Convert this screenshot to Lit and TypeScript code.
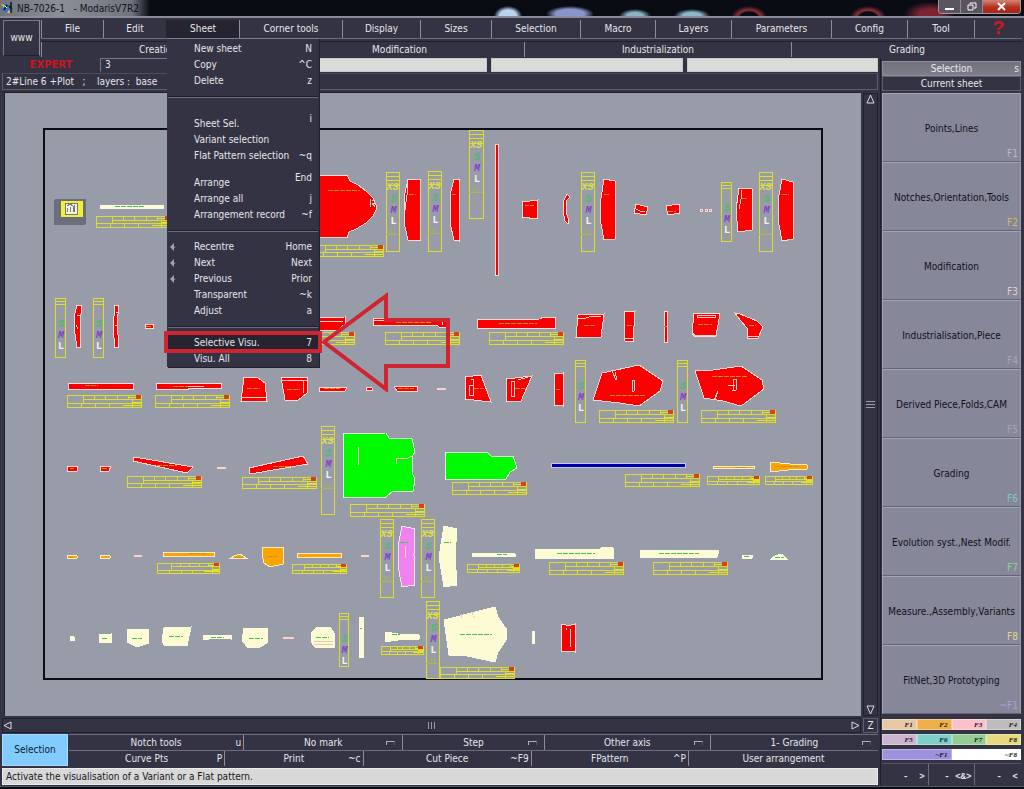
import { LitElement, html, svg, css } from "lit";
import { customElement, state } from "lit/decorators.js";

type Pt = [string, string];

const MENUS: [string, number][] = [
  ["File", 62], ["Edit", 63], ["Sheet", 73], ["Corner tools", 103], ["Display", 78], ["Sizes", 71],
  ["Selection", 89], ["Macro", 75], ["Layers", 76], ["Parameters", 100], ["Config", 76], ["Tool", 67], ["?", 48],
];
const GROUPS: [string, number][] = [["Creation", 233], ["Modification", 250], ["Industrialization", 267], ["Grading", 231]];

interface Entry { label?: string; key?: string; tall?: boolean; mark?: boolean; current?: boolean }
const SHEET_MENU: Entry[] = [
  { label: "New sheet", key: "N" }, { label: "Copy", key: "^C" }, { label: "Delete", key: "z" }, {},
  { label: "Sheet Sel.", key: "i", tall: true }, { label: "Variant selection" },
  { label: "Flat Pattern selection", key: "~q" }, { label: "Arrange", key: "End", tall: true },
  { label: "Arrange all", key: "j" }, { label: "Arrangement record", key: "~f" }, {},
  { label: "Recentre", key: "Home", mark: true }, { label: "Next", key: "Next", mark: true },
  { label: "Previous", key: "Prior", mark: true }, { label: "Transparent", key: "~k" },
  { label: "Adjust", key: "a" }, {}, { label: "Selective Visu.", key: "7", current: true },
  { label: "Visu. All", key: "8" },
];

const PANELS: [string, string, string][] = [
  ["Points,Lines", "F1", "#b8b6c2"], ["Notches,Orientation,Tools", "F2", "#d2b866"], ["Modification", "F3", "#e6ccd8"],
  ["Industrialisation,Piece", "F4", "#a6a6b4"], ["Derived Piece,Folds,CAM", "F5", "#aaa0b4"], ["Grading", "F6", "#7cc6c8"],
  ["Evolution syst.,Nest Modif.", "F7", "#8ad090"], ["Measure.,Assembly,Variants", "F8", "#e0d68c"],
  ["FitNet,3D Prototyping", "~F1", "#a8a0dc"],
];
const SWATCHES: Pt[][] = [
  [["F1", "#e6c8a2"], ["F2", "#efb049"], ["F3", "#fcc0ca"], ["F4", "#bdbdbd"]],
  [["F5", "#cbb4cd"], ["F6", "#7bd0c9"], ["F7", "#95cc92"], ["F8", "#e8d87f"]],
  [["~F1", "#9d90dc"], ["~F8", "#ffffff"]],
];

interface Tool { label: string; key?: string; weight: number; menu?: boolean }
const TOOLS: Tool[][] = [
  [{ label: "Notch tools", key: "u", weight: 175 }, { label: "No mark", weight: 159, menu: true },
   { label: "Step", weight: 141, menu: true }, { label: "Other axis", weight: 166, menu: true },
   { label: "1- Grading", weight: 168, menu: true }],
  [{ label: "Curve Pts", key: "P", weight: 156 }, { label: "Print", key: "~c", weight: 138 },
   { label: "Cut Piece", key: "~F9", weight: 168 }, { label: "FPattern", key: "^P", weight: 157 },
   { label: "User arrangement", weight: 190 }],
];

/* Pattern pieces: fill class and outline, in sheet coordinates. */
const PIECES: Pt[] = [
  ["pale", "100,205 163,205 163,208 100,208"],
  ["red", "290,175 347,175 350,181 358,185 366,191 373,198 376,205 376,210 373,216 366,223 356,229 349,232 347,238 290,237"],
  ["red", "408,179 420,179 420,240 408,240 405,227 404,207 405,193"],
  ["red", "454,179 459,179 459,241 454,240 450,223 450,195"],
  ["red", "495,144 498,144 498,275 495,275"],
  ["red", "522,202 538,200 537,219 522,217"],
  ["red", "567,194 570,197 567,200 566,212 569,221 568,224 565,221 563,210 564,200"],
  ["red", "604,179 615,181 615,239 604,240 600,218 600,205"],
  ["red", "636,204 648,207 646,215 634,213"],
  ["red", "666,206 679,204 680,213 668,215"],
  ["red", "739,188 752,189 752,230 738,232 736,210"],
  ["red", "782,179 793,182 793,239 782,241 778,219 778,201"],
  ["red", "77,305 82,305 80,323 81,347 77,348 74,327 75,313"],
  ["red", "115,305 119,305 117,323 119,347 115,348 113,327"],
  ["red", "145,324 153,324 153,328 145,328"],
  ["red", "290,318 345,317 345,324 338,330 290,330"],
  ["red", "373,318 449,318 449,327 439,327 437,325 373,325"],
  ["red", "477,320 540,319 543,317 555,317 555,328 477,328"],
  ["red", "578,315 604,314 601,337 576,337"],
  ["red", "624,312 635,311 633,342 625,341"],
  ["red", "664,311 667,311 667,342 664,342"],
  ["red", "694,313 720,314 716,336 695,337 692,333"],
  ["red", "735,313 740,314 757,321 763,327 758,338 747,338 747,328 740,320"],
  ["red", "68,383 133,383 133,389 68,389"],
  ["red", "156,383 221,383 221,388 188,388 188,389 156,389"],
  ["red", "244,377 257,377 265,383 267,401 241,401"],
  ["red", "281,377 307,377 307,393 297,401 285,400"],
  ["red", "319,387 347,387 345,391 319,391"],
  ["red", "366,390 366,388 369,387 372,388 372,390"],
  ["red", "394,386 417,386 417,391 397,391"],
  ["red", "465,377 481,375 491,402 465,399"],
  ["red", "506,379 532,376 521,401 506,401"],
  ["red", "554,373 558,374 563,373 563,406 554,405"],
  ["red", "593,400 602,373 639,365 663,381 660,391 639,406 620,403"],
  ["red", "695,371 713,370 741,366 762,380 764,389 741,406 723,401 704,398"],
  ["red", "67,466 78,466 77,471 67,471"],
  ["red", "100,466 111,466 109,471 100,471"],
  ["red", "134,457 193,467 187,473 133,461"],
  ["red", "249,468 303,456 308,464 250,474"],
  ["green", "343,434 386,433 389,438 412,439 415,452 412,457 412,472 415,480 413,491 393,491 386,497 343,497"],
  ["green", "445,452 487,452 491,456 513,456 517,468 510,472 506,479 445,479"],
  ["blue", "551,463 685,463 685,467 551,467"],
  ["orange", "713,466 754,466 754,468 713,468"],
  ["orange", "770,462 790,464 807,465 807,469 788,470 770,472"],
  ["orange", "67,555 71,555 77,556 77,558 67,559"],
  ["orange", "100,555 104,555 110,556 110,558 100,559"],
  ["orange", "163,552 214,552 214,556 163,556"],
  ["orange", "231,558 234,556 240,554 246,558"],
  ["orange", "262,547 283,547 283,564 270,567 264,563 262,555"],
  ["orange", "297,553 341,553 341,557 297,557"],
  ["violet", "402,526 415,529 414,555 415,585 402,587 398,566 398,546"],
  ["pale", "444,526 457,529 455,555 457,585 444,587 439,557"],
  ["pale", "472,554 505,553 515,554 515,556 472,556"],
  ["pale", "535,550 600,549 602,547 613,548 613,558 535,558"],
  ["pale", "640,550 719,550 717,557 640,557"],
  ["pale", "742,555 752,555 752,558 742,559"],
  ["pale", "771,559 775,556 782,554 787,559"],
  ["pale", "70,636 74,637 74,640 70,640"],
  ["pale", "99,635 111,634 111,642 99,642"],
  ["pale", "127,629 148,629 149,643 137,647 127,642"],
  ["pale", "164,628 191,627 187,646 164,645 162,641"],
  ["pale", "203,635 231,635 231,639 215,638 203,640"],
  ["pale", "244,628 267,628 267,643 260,647 247,647 242,640"],
  ["pale", "317,627 330,627 334,633 334,647 315,647 311,642 311,633"],
  ["pale", "359,617 363,617 363,657 359,657"],
  ["pale", "385,632 398,634 419,635 419,639 398,640 385,642"],
  ["pale", "444,620 495,607 498,617 507,630 506,640 498,652 495,662 467,656 449,655"],
  ["pale", "532,631 534,631 534,643 532,643"],
  ["red", "561,624 566,625 571,625 575,624 575,652 571,651 566,651 561,652"],
];

/* Yellow cartridges: x, y, width, height. */
const TABLES: number[][] = [
  [96, 216, 74, 11], [309, 245, 74, 11], [280, 332, 74, 12], [385, 332, 74, 12], [489, 332, 74, 12],
  [599, 410, 74, 12], [701, 410, 74, 12], [67, 395, 74, 12], [155, 395, 74, 12], [127, 476, 74, 11],
  [242, 477, 74, 11], [350, 504, 74, 12], [452, 482, 74, 12], [625, 474, 74, 12], [707, 476, 52, 8],
  [765, 476, 47, 8], [157, 563, 62, 10], [292, 564, 54, 9], [467, 564, 52, 8], [549, 562, 74, 12],
  [653, 562, 74, 12], [381, 646, 42, 8], [440, 667, 74, 11],
];

/* Size ladders: x, y, width, height, 1 when it carries XS and XL. */
const LADDERS: number[][] = [
  [386, 172, 13, 79, 1], [428, 171, 13, 80, 1], [469, 130, 14, 88, 1], [581, 172, 13, 79, 1], [759, 172, 13, 79, 1],
  [721, 182, 10, 59, 0], [55, 298, 10, 59, 0], [93, 298, 10, 59, 0], [575, 360, 10, 62, 0], [677, 360, 10, 62, 0],
  [321, 426, 13, 88, 1], [380, 519, 13, 78, 1], [421, 519, 13, 78, 1], [426, 601, 13, 77, 1], [339, 613, 9, 53, 0],
];

/* Small thread and placement marks drawn as single strokes: class and path. */
const MARKS: Pt[] = [
  ["grain", "M328 190h32"], ["grain", "M409 194h7"], ["grain", "M452 194h4"], ["grain", "M604 194h6"], ["grain", "M782 194h7"],
  ["grain", "M742 198h6"], ["grain", "M525 206v-1h9"], ["grain", "M668 211h8"], ["grain", "M146 326h6"],
  ["grain", "M396 322h36"], ["grain", "M499 323h38"], ["grain", "M584 325h12"], ["grain", "M627 325h5"], ["grain", "M664 326h3"],
  ["grain", "M698 324h14"], ["grain", "M749 325h7"], ["grain", "M85 385h13"], ["grain", "M173 386h15"], ["grain", "M247 388h13"],
  ["grain", "M287 389h13"], ["grain", "M324 388h16"], ["grain", "M398 388h16"], ["grain", "M474 388h10"], ["grain", "M515 388h10"],
  ["grain", "M556 389h4"], ["grain", "M610 395h36"], ["grain", "M712 376h35"], ["grain", "M70 468h4"], ["grain", "M102 468h5"],
  ["grain", "M157 465h20"], ["grain", "M273 466h19"], ["grain", "M735 467h12"], ["grain", "M775 466h25"], ["grain", "M68 557h6"],
  ["grain", "M235 557h8"], ["grain", "M189 553h18"], ["grain", "M268 556h9"], ["thread", "M400 542h8"], ["thread", "M115 206h30"],
  ["thread", "M444 542h7"], ["thread", "M497 554h10"], ["thread", "M557 553h38"], ["thread", "M659 553h40"], ["thread", "M744 556h5"],
  ["thread", "M775 557h9"], ["thread", "M102 638h6"], ["thread", "M132 638h10"], ["thread", "M169 636h14"], ["thread", "M211 637h13"],
  ["thread", "M249 638h14"], ["thread", "M316 637h13"], ["thread", "M360 628h2"], ["thread", "M392 634h8"], ["thread", "M460 634h32"],
  ["line", "M370 199v8M372 200h2v3h-2l3 4M408 181l-1 14-2 15"], ["line", "M741 190v9l-2 10M636 209l4 2h5"],
  ["line", "M373 320h76M442 321v4"], ["line", "M578 318h8l6-2h9M625 338h8M697 315h18v2h-18zM692 333l3 2h21M747 336h11"],
  ["line", "M242 397h24M281 380h26M303 381v12M188 386h16"], ["line", "M471 379h2v16h-4v-10h4M511 381h3v15h-3zM518 380l10-3"],
  ["line", "M612 371l4 9 1-1-2-7M632 380h3l-1 11h-2zM728 385h7M734 379h3l-1 11h-3zM714 400l4-9-3 9"],
  ["line", "M358 447v18M396 464v-6h12l4-2M405 546v12M570 629v18M566 628v2"],
  ["line", "M700 209h2v2h-2zM705 209h2v2h-2zM709 209h2v2h-2zM437 388h8v1h-8zM217 467h8v1h-8zM134 555h7v1h-7zM361 555h7v1h-7zM283 637h10v1h-10z"],
  ["line", "M77 315l3 1M76 325l2 4M116 312h2M115 325h2M317 321h26"],
  ["faint", "M461 614v4M472 612v3M473 616l2 2M314 641h19M314 644h19"],
];

function ladder([x, y, w, h, full]: number[]) {
  const c = x + w / 2;
  const rungs = full ? [4, 8, 13] : [3, 6];
  const s = full ? 0 : -1;
  return svg`
    <rect class="y" x=${x} y=${y} width=${w} height=${h}></rect>
    ${rungs.map((r) => svg`<path class="y" d="M${x} ${y + r}h${w}"></path>`)}
    ${full ? svg`<text class="xs" x=${c} y=${y + 18}>XS</text>
      <text class="xl" x=${c} y=${y + 62}>XL</text>
      <path class="y dim" d="M${x} ${y + 62}h${w}"></path>` : null}
    <text class="s" x=${c + 1} y=${y + s + 30}>S</text>
    <text class="m" x=${c + 1} y=${y + s + 41}>M</text>
    <text class="l" x=${c + 1} y=${y + s + 52}>L</text>`;
}

function cartridge([x, y, w, h]: number[]) {
  const a = Math.round(h / 3), b = Math.round((2 * h) / 3);
  const p = (f: number) => x + Math.round(w * f);
  return svg`
    <rect class="y" x=${x} y=${y} width=${w} height=${h}></rect>
    <path class="y" d="M${p(0.22)} ${y + a}H${x + w}M${x} ${y + b}H${x + w}M${p(0.22)} ${y}V${y + b}"></path>
    <path class="y" d="M${p(0.37)} ${y}v${a}M${p(0.51)} ${y}v${a}M${p(0.67)} ${y}v${a}M${p(0.82)} ${y}v${a}
      M${p(0.19)} ${y + b}V${y + h}M${p(0.38)} ${y + b}V${y + h}M${p(0.57)} ${y + b}V${y + h}M${p(0.88)} ${y + a}V${y + h}"></path>
    <path class="y thin" d="M${p(0.82)} ${y + 2}H${x + w}M${p(0.76)} ${y + h - 2}H${x + w}M${p(0.88)} ${y + b - 1}H${x + w}"></path>
    <rect class="stamp" x=${x + w - 5} y=${y} width="5" height=${Math.min(4, a)}></rect>`;
}

@customElement("sheet-canvas")
class SheetCanvas extends LitElement {
  static styles = css`
    :host { display: block; background: #989ca8; overflow: hidden; }
    svg { display: block; width: 100%; height: 100%; shape-rendering: crispEdges; }
    .frame { fill: none; stroke: #0b0d16; stroke-width: 2; }
    .red { fill: #fa0000; stroke: #ffd8d4; }
    .green { fill: #00fa00; stroke: #d8ffd8; }
    .blue { fill: #0000a8; stroke: #c4c8f4; }
    .orange { fill: #fba400; stroke: #fdeccc; }
    .violet { fill: #ee82ee; stroke: #fbe0fa; }
    .pale { fill: #fdfbd4; stroke: #fbfae0; }
    .y { fill: none; stroke: #dede28; }
    .thin { stroke: #e8e418; }
    .dim { stroke: #b0b060; }
    .stamp { fill: #d8401c; }
    .grain { fill: none; stroke: #c89410; stroke-dasharray: 5 1; }
    .thread { fill: none; stroke: #46c05a; stroke-dasharray: 5 1; }
    .line { fill: none; stroke: #ffd0cc; }
    .faint { fill: none; stroke: #ecc8a8; }
    .tile { fill: #6b6f7c; }
    .lit { fill: #f2f034; }
    .doodle { fill: #f4f4e4; stroke: #77767c; }
    text { font: italic bold 10px "Liberation Mono", "Liberation Serif", monospace; text-anchor: middle; }
    .xs { fill: #dcdc50; }
    .s { fill: #52b86e; }
    .m { fill: #8440cc; }
    .l { fill: #f2f2f4; font-style: normal; }
    .xl { fill: #a0ac70; font-size: 8px; }
  `;
  render() {
    return html`<svg viewBox="5 93 856 623" preserveAspectRatio="xMidYMid meet" role="img" aria-label="Pattern sheet">
      <rect class="frame" x="44" y="129" width="778" height="550"></rect>
      <rect class="tile" x="54" y="199" width="32" height="26" rx="2"></rect>
      <rect class="lit" x="61" y="201" width="22" height="16"></rect>
      <path class="doodle" d="M65 203h12v11h-12zM67 206l3-2 3 2v6M70 207v5M74 205v7M67 208v4"></path>
      ${PIECES.map(([kind, points]) => svg`<polygon class=${kind} points=${points}></polygon>`)}
      ${MARKS.map(([kind, d]) => svg`<path class=${kind} d=${d}></path>`)}
      ${TABLES.map(cartridge)}
      ${LADDERS.map(ladder)}
    </svg>`;
  }
}

@customElement("app-root")
class AppRoot extends LitElement {
  @state() private open = "Sheet";

  static styles = css`
    :host {
      display: flex; flex-direction: column; height: 100vh; box-sizing: border-box;
      background: #333344; color: #e6e6ea; overflow: hidden;
      font: 10px/14px "DejaVu Sans Condensed", "DejaVu Sans", sans-serif;
      --edge: #77778a;
    }
    * { box-sizing: border-box; }
    button, input, select {
      font: inherit; color: inherit; background: none; border: 0; margin: 0; padding: 0; border-radius: 0; min-width: 0;
      white-space: nowrap;
    }
    .title {
      display: flex; align-items: center; height: 18px; gap: 4px; padding-left: 1px;
      border-bottom: 2px solid #8a8c98; color: #10121a;
      background:
        radial-gradient(ellipse 14px 10px at 508px 16px, #b8d4ee 60%, transparent),
        radial-gradient(ellipse 24px 8px at 570px 14px, #8a94cc 60%, transparent),
        radial-gradient(ellipse 16px 7px at 635px 16px, #88b4c4 50%, transparent),
        radial-gradient(ellipse 18px 7px at 692px 16px, #8cb8cc 50%, transparent),
        radial-gradient(ellipse 18px 12px at 749px 18px, transparent 50%, #8c3038 65%, transparent),
        radial-gradient(ellipse 18px 12px at 868px 18px, transparent 50%, #8c3038 65%, transparent),
        radial-gradient(ellipse 26px 12px at 930px 14px, #7c2434 40%, transparent),
        linear-gradient(90deg, #70747e 0, #8b8f98 60px, #70747e 132px, #0a0c14 150px, #0a0c14 100%);
    }
    .title svg { width: 12px; height: 12px; }
    .caption { flex: 1; white-space: pre; padding-top: 1px; }
    .winbtns { display: flex; align-self: flex-start; height: 14px; margin-right: 3px; border: 1px solid #9a9ca6; border-top: 0; border-radius: 0 0 4px 4px; overflow: hidden; }
    .winbtns button { display: grid; place-items: center; width: 22px; background: #5a545e; border-right: 1px solid #8c8c96; }
    .winbtns button:last-child { width: 37px; background: linear-gradient(#d08878, #b83020 55%, #a82414); border: 0; }
    .winbtns svg { width: 11px; height: 9px; }

    .head { display: grid; grid-template-columns: 37px 1fr; gap: 1px; padding: 2px 2px 0 3px; }
    .www { height: 36px; border: 1px solid var(--edge); border-color: var(--edge) #8a8a9a #22222e var(--edge); }
    .bar { display: flex; }
    .bar > button { flex: var(--w) 1 0; border-left: 1px solid #8c8c9a; }
    .slot { position: relative; flex: var(--w) 1 0; display: flex; }
    .slot > button { flex: 1; height: 18px; border-left: 1px solid #8c8c9a; }
    .menubar { margin-bottom: 2px; border-bottom: 1px solid #6c6c7e; }
    .menubar .active { background: #252430; border-color: #252430; }
    .menubar .help { color: #c81820; font: bold 20px/18px "Liberation Mono", monospace; }
    .groups { border-top: 1px solid #20202c; }
    .groups button { height: 15px; }

    .menu {
      position: absolute; z-index: 2; left: 1px; top: 18px; width: 152px; padding: 2px 1px 0;
      background: #333344; border-top: 1px solid #7c7c8c; box-shadow: 1px 1px 0 #22222e; display: flex; flex-direction: column;
    }
    .item {
      flex: none; position: relative; display: grid; grid-template-columns: 26px 1fr auto; align-items: center;
      height: 16px; width: 100%; padding-right: 6px; text-align: left; overflow: visible;
    }
    .tall { height: 27px; }
    .tall .name { align-self: end; padding-bottom: 1px; }
    .current { background: #252430; }
    .menu hr { width: 100%; height: 16px; margin: 0; border: 0; background: linear-gradient(#1f1f2c, #1f1f2c) 0 7px / 100% 1px no-repeat, linear-gradient(#6c6c80, #6c6c80) 0 8px / 100% 1px no-repeat; }
    .pin { display: block; width: 8px; height: 8px; margin-left: 2px; }
    .callout { position: absolute; left: -5px; top: -43px; width: 290px; height: 100px; pointer-events: none; fill: none; stroke: #cf2531; stroke-width: 4; }

    .main { flex: 1; min-height: 0; display: grid; grid-template-columns: minmax(0, 1fr) 142px; column-gap: 2px; padding: 1px 2px 0 2px; }
    .work { display: flex; flex-direction: column; min-height: 0; }
    .fields { display: grid; grid-template-columns: 94px repeat(4, 1fr); column-gap: 4px; height: 14px; align-items: center; }
    .mode { color: #d01420; font: bold 10px/14px "DejaVu Sans", sans-serif; text-align: center; padding-left: 4px; }
    .fields input { width: 100%; height: 14px; background: #dadcda; color: #111; padding: 0 4px; border: 1px solid #c8cac8; }
    .fields .level { background: #333344; color: #e6e6ea; border-color: #77778a #333344 #333344 #77778a; }
    .info { height: 17px; margin: 1px 0 0; padding: 0 3px; border: 1px solid #5e5e70; border-top-color: #4c4c5e; white-space: pre; line-height: 15px; }
    .view { flex: 1; min-height: 0; display: grid; grid-template-columns: minmax(0, 1fr) 15px; grid-template-rows: minmax(0, 1fr) 15px; gap: 2px; padding: 3px 0 1px; }
    sheet-canvas { margin-left: 3px; box-shadow: -1px -1px 0 #1f1f2c; min-height: 0; }
    .scroll { display: flex; justify-content: space-between; align-items: center; background: #333344; border: 1px solid #22222e; }
    .scroll.v { flex-direction: column; }
    .scroll svg { display: block; width: 11px; height: 11px; fill: none; stroke: #dcdce2; }
    .scroll .grip { stroke: #9a9aaa; }
    .corner { border: 1px solid #5e5e70; line-height: 12px; }

    .tools { display: grid; grid-template-columns: 66px 1fr; column-gap: 1px; height: 32px; }
    .pick { background: #82cbff; color: #10202c; border: 1px solid #a8dcff; }
    .rows { display: grid; grid-template-rows: 1fr 1fr; }
    .row { display: flex; border-top: 1px solid #6c6c7e; }
    .tool { flex: var(--w) 1 0; display: grid; min-width: 0; border-right: 1px solid #8c8c9a; }
    .row .tool:last-child { border-right: 0; }
    .tool > * { grid-area: 1 / 1; }
    .tool select { appearance: none; width: 100%; text-align: center; text-align-last: center; }
    .tool .end { justify-self: end; align-self: center; margin-right: 2px; pointer-events: none; }
    .tool .knob { width: 9px; height: 4px; margin-right: 7px; border-top: 1px solid #b0b0bc; border-left: 1px solid #b0b0bc; border-right: 1px solid #55556a; }
    .status { display: block; height: 17px; margin-top: 2px; padding: 1px 3px; background: #d8d8d8; color: #16161c; border: 1px solid #ececec; }

    .side { display: flex; flex-direction: column; min-height: 0; padding: 3px 1px 0 1px; border-left: 1px solid #1f1f2c; }
    .mode-btn { position: relative; height: 15px; background: linear-gradient(#72727f, #7e7e8a); border: 1px solid #8e8e9c; }
    .mode-btn .end { position: absolute; right: 1px; top: 0; }
    .sheet { height: 15px; border: 1px solid #5e5e70; margin-bottom: 2px; }
    .panels { flex: 1; min-height: 0; display: grid; grid-auto-rows: 1fr; }
    .panel { position: relative; background: #87879a; color: #101018; border: 1px solid; border-color: #a4a4b0 #9c9cac #63637a #a4a4b0; padding-top: 2px; }
    .panel .end { position: absolute; right: 2px; bottom: 0; }
    .swatches { display: grid; gap: 4px; padding: 5px 0 3px; }
    .sw { display: flex; height: 11px; }
    .sw button { flex: 1; text-align: right; padding-right: 3px; color: #15151c; font: italic bold 7px/11px "Liberation Serif", serif; border: 1px solid rgba(255, 255, 255, 0.35); }
    .keys { display: flex; height: 22px; }
    .keys button { flex: 1; text-align: right; padding: 4px 3px 0; white-space: pre; font: bold 9px/12px "Liberation Mono", monospace; border-right: 1px solid #6c6c7e; border-top: 1px solid #55556a; }
    .keys button:last-child { border-right: 0; }
    .foot { height: 3px; margin-top: 1px; background: linear-gradient(#55576a 1px, #0a0c14 1px); }
  `;

  private menu() {
    return html`<div class="menu" role="menu">
      ${SHEET_MENU.map((e) => e.label
        ? html`<button role="menuitem" class="item ${e.tall ? "tall" : ""} ${e.current ? "current" : ""}">
            <span>${e.mark ? html`<svg class="pin" viewBox="0 0 8 8"><path d="M4 0L0 4l4 4V5l3-2-3 1z" fill="#a0a0ae"></path><path d="M5 2l2 1" stroke="#1f1f2c"></path></svg>` : null}</span>
            <span class="name">${e.label}</span><span>${e.key ?? ""}</span>
            ${e.current ? html`<svg class="callout" viewBox="0 0 290 100">
              <rect x="3" y="41" width="154" height="18"></rect>
              <path d="M161 50L223 4V28H285V74H223V97Z"></path></svg>` : null}
          </button>`
        : html`<hr />`)}
    </div>`;
  }

  private tool(t: Tool) {
    return html`<div class="tool" style="--w:${t.weight}">
      ${t.menu
        ? html`<select aria-label=${t.label}><option>${t.label}</option></select><span class="end knob"></span>`
        : html`<button>${t.label}</button><span class="end">${t.key ?? ""}</span>`}
    </div>`;
  }

  render() {
    return html`
      <header class="title">
        <svg viewBox="0 0 12 12"><circle cx="5" cy="6" r="4" fill="#2f78c8"></circle><path d="M0 2l4 1-1 3zM8 8l3 3H6z" fill="#f0c020"></path><path d="M10 0v11M8 4l3 3M3 8l3-5" stroke="#10121a" stroke-width="1.5"></path><path d="M4 4l2 2" stroke="#fff"></path></svg>
        <span class="caption">NB-7026-1   - ModarisV7R2</span>
        <div class="winbtns">
          <button aria-label="Minimize"><svg viewBox="0 0 11 9"><path d="M1 6h9v2H1z" fill="#fff"></path></svg></button>
          <button aria-label="Restore"><svg viewBox="0 0 11 9" fill="none" stroke="#fff"><path d="M4 2V1h6v5H8"></path><path d="M2 3h5v5H2z"></path></svg></button>
          <button aria-label="Close"><svg viewBox="0 0 11 9"><path d="M2 1l7 7M9 1L2 8" stroke="#fff" stroke-width="2"></path></svg></button>
        </div>
      </header>
      <div class="head">
        <button class="www">www</button>
        <div>
          <nav class="bar menubar">
            ${MENUS.map(([name, w]) => html`<div class="slot" style="--w:${w}">
              <button class="${name === this.open ? "active" : ""} ${name === "?" ? "help" : ""}"
                @click=${() => (this.open = this.open === name ? "" : name)}>${name}</button>
              ${name === "Sheet" && this.open === name ? this.menu() : null}
            </div>`)}
          </nav>
          <nav class="bar groups">${GROUPS.map(([name, w]) => html`<button style="--w:${w}">${name}</button>`)}</nav>
        </div>
      </div>
      <div class="main">
        <section class="work">
          <div class="fields">
            <label class="mode" for="level">EXPERT</label>
            <input id="level" class="level" value="3" />
            <input aria-label="Modification value" /><input aria-label="Industrialization value" /><input aria-label="Grading value" />
          </div>
          <p class="info">2#Line 6 +Plot   ;    layers :  base</p>
          <div class="view">
            <sheet-canvas></sheet-canvas>
            <div class="scroll v">
              <button aria-label="Scroll up"><svg viewBox="0 0 11 11"><path d="M5.500 1L9 9H2z"></path></svg></button>
              <svg class="grip" viewBox="0 0 11 11"><path d="M1 2.500h9M1 5.500h9M1 8.500h9"></path></svg>
              <button aria-label="Scroll down"><svg viewBox="0 0 11 11"><path d="M2 2h7l-3.500 8z"></path></svg></button>
            </div>
            <div class="scroll">
              <button aria-label="Scroll left"><svg viewBox="0 0 11 11"><path d="M1 5.500L8 2v7z"></path></svg></button>
              <svg class="grip" viewBox="0 0 11 11"><path d="M2.500 2v7M5.500 2v7M8.500 2v7"></path></svg>
              <button aria-label="Scroll right"><svg viewBox="0 0 11 11"><path d="M3 2l7 3.500L3 9z"></path></svg></button>
            </div>
            <button class="corner">Z</button>
          </div>
          <div class="tools">
            <button class="pick">Selection</button>
            <div class="rows">${TOOLS.map((r) => html`<div class="row">${r.map((t) => this.tool(t))}</div>`)}</div>
          </div>
          <output class="status">Activate the visualisation of a Variant or a Flat pattern.</output>
        </section>
        <aside class="side">
          <button class="mode-btn">Selection<span class="end">s</span></button>
          <button class="sheet">Current sheet</button>
          <div class="panels">
            ${PANELS.map(([name, key, color]) => html`<button class="panel">${name}<span class="end" style="color:${color}">${key}</span></button>`)}
          </div>
          <div class="swatches">
            ${SWATCHES.map((r) => html`<div class="sw">${r.map(([k, c]) => html`<button style="background:${c}">${k}</button>`)}</div>`)}
          </div>
          <div class="keys"><button>-  &gt;</button><button>- &lt;&amp;&gt;</button><button>-  &lt;</button></div>
        </aside>
      </div>
      <div class="foot"></div>
    `;
  }
}
